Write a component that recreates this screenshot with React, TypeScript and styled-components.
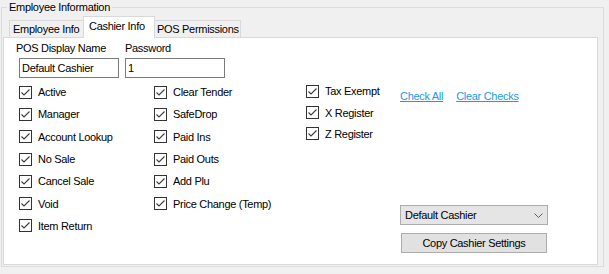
import React from 'react';
import styled, { createGlobalStyle } from 'styled-components';

const GlobalStyle = createGlobalStyle`
  body {
    margin: 0;
    background: #f0f0f0;
    font-family: "Liberation Sans", Arial, sans-serif;
    font-size: 11px;
    letter-spacing: -0.3px;
    color: #000;
  }
`;

const firstColumn = ['Active', 'Manager', 'Account Lookup', 'No Sale', 'Cancel Sale', 'Void', 'Item Return'];
const secondColumn = ['Clear Tender', 'SafeDrop', 'Paid Ins', 'Paid Outs', 'Add Plu', 'Price Change (Temp)'];
const thirdColumn = ['Tax Exempt', 'X Register', 'Z Register'];

const CheckItem: React.FC<{ label: string, compact?: boolean }> = ({ label, compact }) => (
  <CheckRow compact={compact}>
    <Box>
      <svg width="11" height="11" viewBox="0 0 11 11">
        <polyline points="1.5,5.5 4,8 9.5,2.5" fill="none" stroke="#3c3c3c" strokeWidth="1.1" />
      </svg>
    </Box>
    <span>{label}</span>
  </CheckRow>
);

export default function App() {
  return (
    <Page>
      <GlobalStyle />
      <GroupBox>
        <Legend>Employee Information</Legend>
        <TabStrip>
          <Tab w={76}>Employee Info</Tab>
          <Tab w={72} active>Cashier Info</Tab>
          <Tab w={88}>POS Permissions</Tab>
        </TabStrip>
        <Panel>
          <FieldsRow>
            <Field>
              <FieldLabel shift={-3}>POS Display Name</FieldLabel>
              <TextBox>Default Cashier</TextBox>
            </Field>
            <Field>
              <FieldLabel shift={0}>Password</FieldLabel>
              <TextBox>1</TextBox>
            </Field>
          </FieldsRow>
          <Body>
            <Column w={135}>
              {firstColumn.map((l) => <CheckItem key={l} label={l} />)}
            </Column>
            <Column w={152}>
              {secondColumn.map((l) => <CheckItem key={l} label={l} />)}
            </Column>
            <Column w={94}>
              {thirdColumn.map((l) => <CheckItem key={l} label={l} compact />)}
            </Column>
            <Side>
              <Links>
                <Link>Check All</Link>
                <Link>Clear Checks</Link>
              </Links>
              <Combo>
                <span>Default Cashier</span>
                <svg width="9" height="5" viewBox="0 0 9 5">
                  <polyline points="0.5,0.5 4.5,4.5 8.5,0.5" fill="none" stroke="#606060" strokeWidth="1" />
                </svg>
              </Combo>
              <Button>Copy Cashier Settings</Button>
            </Side>
          </Body>
        </Panel>
      </GroupBox>
    </Page>
  );
}

const Page = styled.div`
  width: 609px;
  height: 274px;
  box-sizing: border-box;
  padding: 1px 0 0 1px;
`;

const GroupBox = styled.fieldset`
  box-sizing: border-box;
  width: 603px;
  margin: 0;
  padding: 0 5px 1px 1px;
  border: 1px solid #dcdcdc;
`;

const Legend = styled.legend`
  margin-left: 4px;
  padding: 0 2px;
  line-height: 13px;
  color: #000;
`;

const TabStrip = styled.div`
  display: flex;
  align-items: flex-end;
  height: 21px;
  margin-top: 2px;
  padding-left: 6px;
`;

const Tab = styled.div<{ w: number, active?: boolean }>`
  box-sizing: border-box;
  width: ${(p) => p.w}px;
  height: ${(p) => (p.active ? 22 : 17)}px;
  margin: 0 ${(p) => (p.active ? -2 : 0)}px ${(p) => (p.active ? -1 : 0)}px;
  padding: ${(p) => (p.active ? '2px 0 0 5px' : '1px 0 0 3px')};
  border: 1px solid #d9d9d9;
  border-bottom: none;
  background: ${(p) => (p.active ? '#fff' : '#f0f0f0')};
  position: relative;
  z-index: ${(p) => (p.active ? 1 : 0)};
  line-height: 14px;
  white-space: nowrap;
`;

const Panel = styled.div`
  box-sizing: border-box;
  width: 595px;
  height: 228px;
  background: #fff;
  border: 1px solid #d9d9d9;
  padding: 4px 0 11px 15px;
  display: flex;
  flex-direction: column;
`;

const FieldsRow = styled.div`
  display: flex;
  gap: 6px;
`;

const Field = styled.div`
  display: flex;
  flex-direction: column;
  gap: 3px;
`;

const FieldLabel = styled.div<{ shift: number }>`
  margin-left: ${(p) => p.shift}px;
  line-height: 13px;
`;

const TextBox = styled.div`
  box-sizing: border-box;
  width: 100px;
  height: 20px;
  border: 1px solid #7a7a7a;
  padding: 0 2px;
  line-height: 18px;
`;

const Body = styled.div`
  flex: 1;
  display: flex;
  margin-top: 3px;
`;

const Column = styled.div<{ w: number }>`
  width: ${(p) => p.w}px;
  display: flex;
  flex-direction: column;
`;

const CheckRow = styled.div<{ compact?: boolean }>`
  display: flex;
  align-items: center;
  gap: 6px;
  height: ${(p) => (p.compact ? 21.5 : 22.3)}px;
  margin-top: ${(p) => (p.compact ? -0.3 : 0)}px;
  white-space: nowrap;
`;

const Box = styled.div`
  box-sizing: border-box;
  width: 13px;
  height: 13px;
  border: 1px solid #333;
  background: #fff;
  display: flex;
  align-items: center;
  justify-content: center;
  flex-shrink: 0;
`;

const Side = styled.div`
  flex: 1;
  display: flex;
  flex-direction: column;
  align-items: flex-start;
`;

const Links = styled.div`
  display: flex;
  gap: 13px;
  margin-top: 9px;
  margin-bottom: auto;
  line-height: 13px;
`;

const Link = styled.span`
  color: #1a9be6;
  text-decoration: underline;
  cursor: pointer;
`;

const Combo = styled.div`
  box-sizing: border-box;
  width: 148px;
  height: 20px;
  display: flex;
  align-items: center;
  justify-content: space-between;
  padding: 0 4px 0 4px;
  background: #e5e5e5;
  border: 1px solid #adadad;
`;

const Button = styled.div`
  box-sizing: border-box;
  width: 146px;
  height: 20px;
  margin: 8px 0 0 1px;
  background: #e1e1e1;
  border: 1px solid #adadad;
  text-align: center;
  line-height: 18px;
`;
